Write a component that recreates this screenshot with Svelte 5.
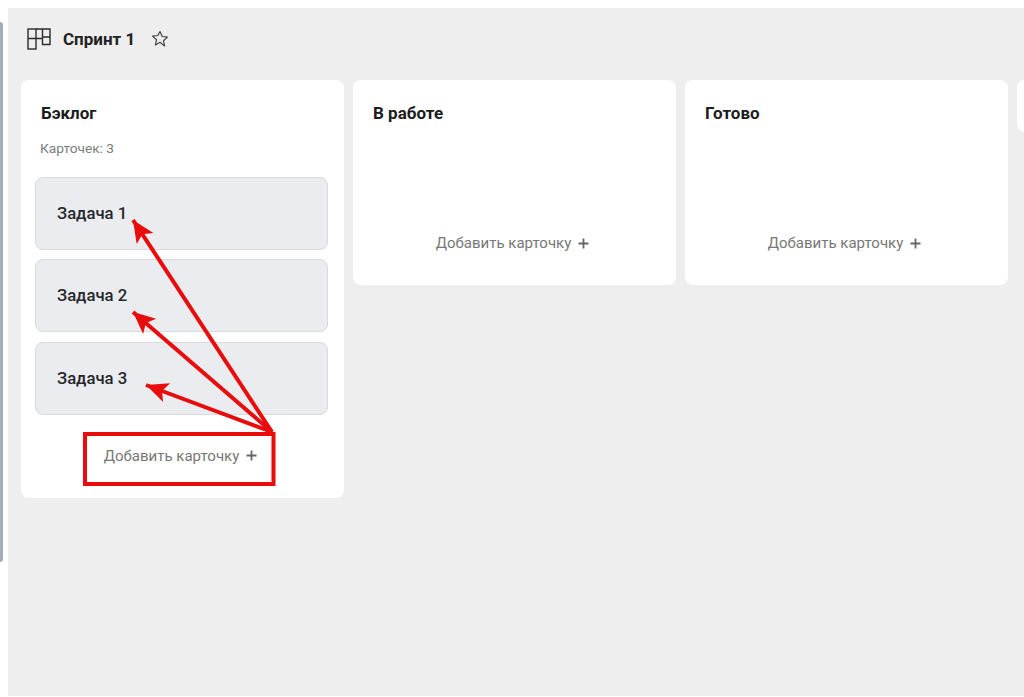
<script lang="ts">
	const columns = [
		{ title: 'Бэклог', count: 3, cards: ['Задача 1', 'Задача 2', 'Задача 3'] },
		{ title: 'В работе', count: 0, cards: [] },
		{ title: 'Готово', count: 0, cards: [] },
		{ title: '', count: 0, cards: [] }
	];

	// annotation arrows drawn over the board: [tipX, tipY]
	const tips = [
		[133, 220],
		[133, 312],
		[146, 385]
	];
	const from = [272, 432];

	function head(tip: number[]) {
		const dx = from[0] - tip[0];
		const dy = from[1] - tip[1];
		const len = Math.hypot(dx, dy);
		const ux = dx / len;
		const uy = dy / len;
		const bx = tip[0] + ux * 22;
		const by = tip[1] + uy * 22;
		const mx = tip[0] + ux * 17;
		const my = tip[1] + uy * 17;
		const nx = -uy * 10;
		const ny = ux * 10;
		return `${tip[0]},${tip[1]} ${bx + nx},${by + ny} ${mx},${my} ${bx - nx},${by - ny}`;
	}
</script>

<div class="page">
	<div class="edge"></div>
	<main class="board">
		<header class="head">
			<svg class="board-icon" width="24" height="22" viewBox="0 0 24 22" fill="none" stroke="#2b2b2b" stroke-width="1.4">
				<rect x="1" y="1" width="8" height="20" />
				<path d="M1 10.500h8M9 1h14v15.500h-7.500V1M9 10.500h6.500M15.500 9H23" />
			</svg>
			<h1>Спринт 1</h1>
			<svg class="star" width="18" height="18" viewBox="0 0 18 18" fill="none" stroke="#444" stroke-width="1.2" stroke-linejoin="round">
				<path d="M9 1.600l2.200 4.900 5.300.6-4 3.600 1.100 5.300L9 12.300 4.400 15l1.100-5.300-4-3.600 5.300-.6z" />
			</svg>
		</header>

		<div class="columns">
			{#each columns as col}
				<section class="column" class:stub={!col.title}>
					{#if col.title}
						<h2>{col.title}</h2>
						{#if col.count}
							<p class="count">Карточек: {col.count}</p>
						{/if}
						<div class="cards" class:empty={!col.cards.length}>
							{#each col.cards as card}
								<div class="card">{card}</div>
							{/each}
						</div>
						<button class="add">
							Добавить карточку
							<svg width="11" height="11" viewBox="0 0 11 11" stroke="#666" stroke-width="1.800"><path d="M5.500 0.500v10M0.500 5.500h10" /></svg>
						</button>
					{/if}
				</section>
			{/each}
		</div>
	</main>

	<svg class="marks" width="1024" height="697" viewBox="0 0 1024 697" fill="none">
		<rect x="85" y="434" width="188.500" height="50" stroke="#e80c0c" stroke-width="4" />
		{#each tips as tip}
			<line x1={from[0]} y1={from[1]} x2={tip[0]} y2={tip[1]} stroke="#e80c0c" stroke-width="4" />
			<polygon points={head(tip)} fill="#e80c0c" />
		{/each}
	</svg>
</div>

<style>
	:global(body) {
		background: #fff;
		font-family: Roboto, 'Liberation Sans', sans-serif;
	}

	.page {
		position: relative;
		width: 1024px;
		height: 697px;
		overflow: hidden;
		box-sizing: border-box;
		padding: 8px 0 1px 8px;
	}

	/* sliver of the neighbouring panel on the left edge */
	.edge {
		position: absolute;
		left: 0;
		top: 22px;
		width: 3px;
		height: 540px;
		background: #a3adb8;
		border-radius: 0 3px 3px 0;
	}

	.board {
		height: 100%;
		background: #eeeeee;
		padding: 0 0 0 13px;
		overflow: hidden;
	}

	.head {
		display: flex;
		align-items: center;
		height: 62px;
		padding: 0 0 0 6px;
	}

	.board-icon {
		margin-right: 12px;
	}

	h1 {
		margin: 0 16px 0 0;
		font-size: 17px;
		font-weight: 700;
		color: #222;
	}

	.columns {
		display: flex;
		align-items: flex-start;
		gap: 9px;
		margin-top: 10px;
		width: 1100px;
	}

	.column {
		flex: none;
		box-sizing: border-box;
		width: 323px;
		background: #fff;
		border-radius: 8px;
		padding: 24px 16px 17px 14px;
	}

	.column.stub {
		height: 52px;
	}

	h2 {
		margin: 0 0 0 6px;
		font-size: 17px;
		line-height: 19px;
		font-weight: 700;
		color: #1c1c1c;
	}

	.count {
		margin: 18px 0 0 5px;
		font-size: 13.700px;
		line-height: 15px;
		color: #7c7c7c;
	}

	.cards {
		display: flex;
		flex-direction: column;
		gap: 9.400px;
		margin-top: 21px;
	}

	.cards.empty {
		margin-top: 0;
		height: 79px;
		margin-bottom: 1px;
	}

	.card {
		box-sizing: border-box;
		height: 73px;
		display: flex;
		align-items: center;
		padding: 0 21px 0 21px;
		background: #ebecf0;
		border: 1px solid #d8dade;
		border-radius: 8px;
		font-size: 16.700px;
		font-weight: 500;
		color: #26272b;
	}

	.add {
		display: flex;
		align-items: center;
		justify-content: center;
		gap: 7px;
		width: 100%;
		height: 46px;
		margin-top: 20px;
		padding: 0 2px 4px 0;
		background: none;
		border: 0;
		font: 400 15px Roboto, 'Liberation Sans', sans-serif;
		color: #777;
	}

	.marks {
		position: absolute;
		left: 0;
		top: 0;
		pointer-events: none;
	}
</style>
